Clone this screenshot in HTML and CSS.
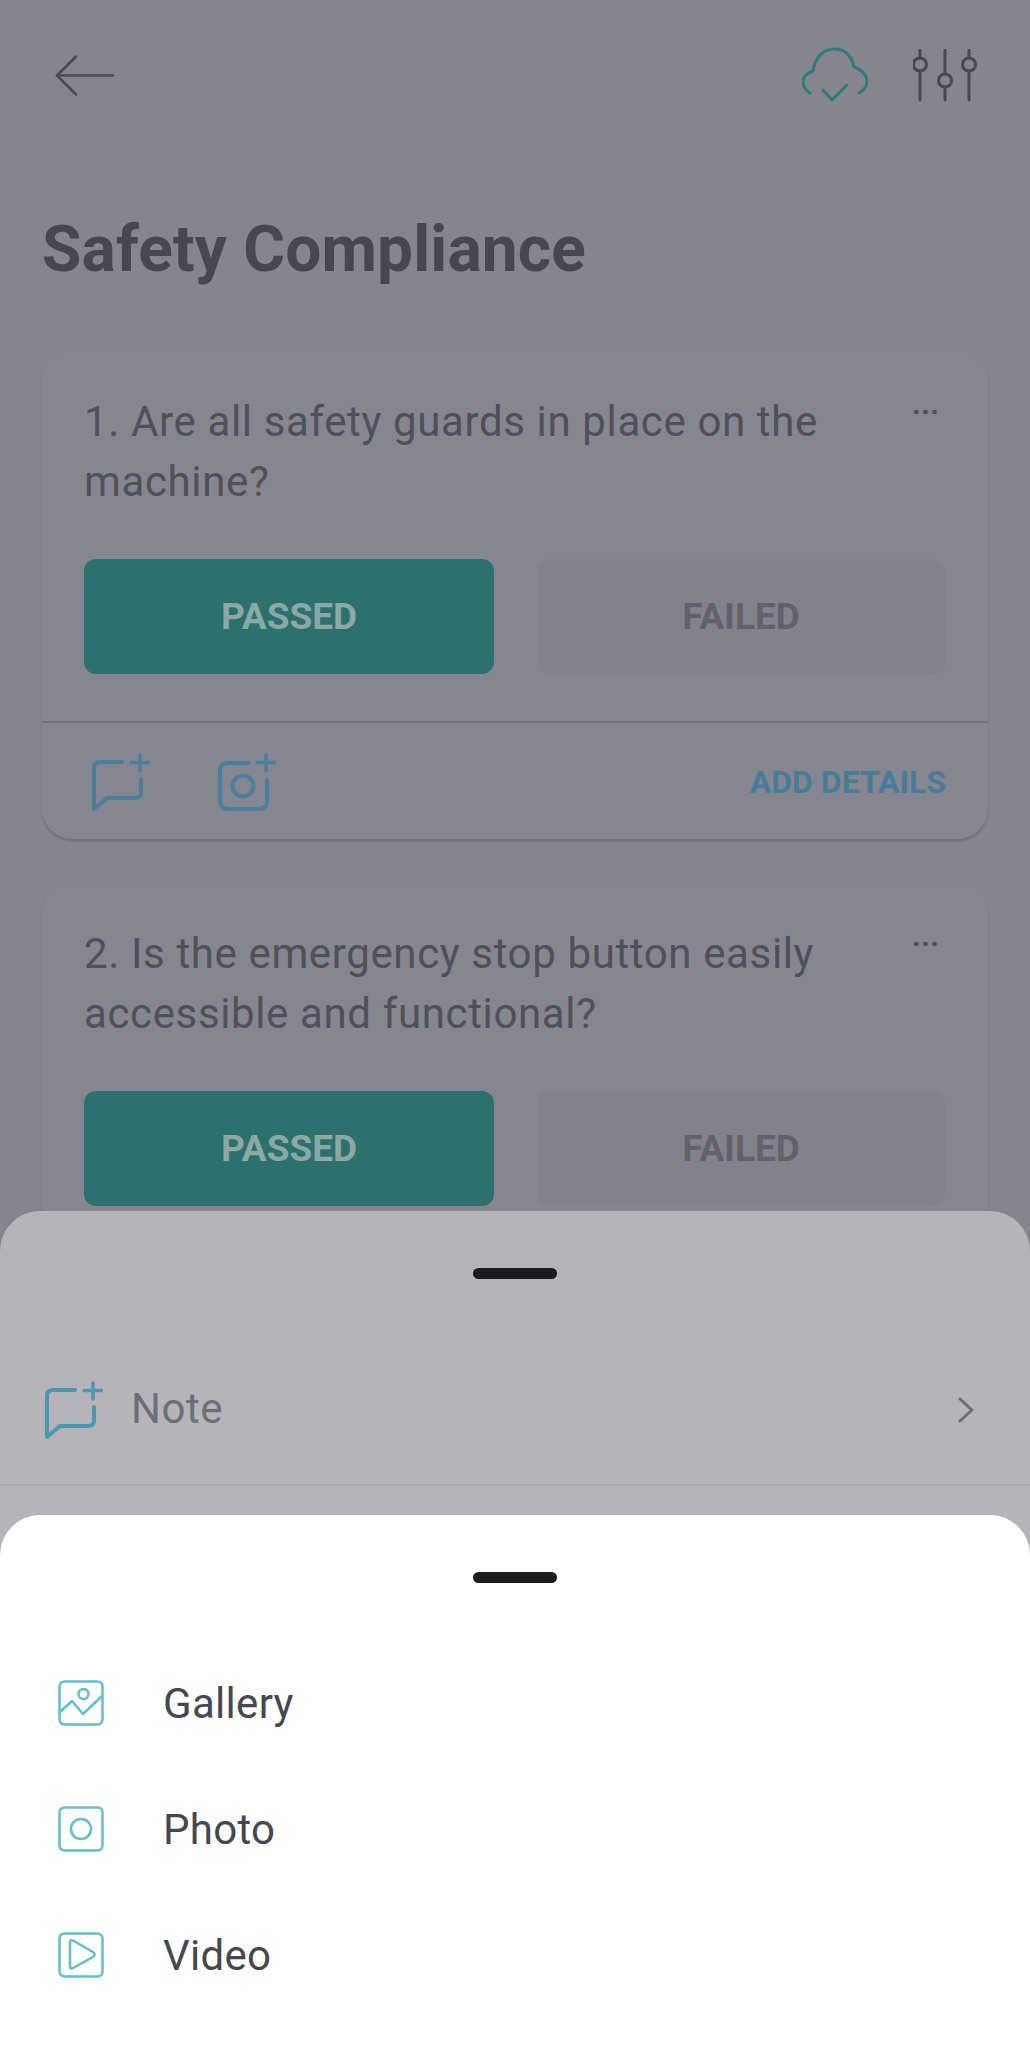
FILE: index.html
```html
<!DOCTYPE html>
<html lang="en">
<head>
<meta charset="UTF-8">
<meta name="viewport" content="width=device-width, initial-scale=1.0">
<title>Safety Compliance</title>
<link rel="stylesheet" href="styles.css">
</head>
<body>
<div class="app">
  <header class="topbar">
    <svg class="icon-back" width="60" height="41" viewBox="0 0 60 41" fill="none" stroke="#4a4a54" stroke-width="2.5" stroke-linecap="round" stroke-linejoin="round">
      <path d="M21 1.5 L2 20.5 L21 39.5"/><path d="M2 20.5 H58"/>
    </svg>
    <div class="topbar-right">
      <svg width="66" height="56" viewBox="0 0 66 56" fill="none" stroke="#2f7d78" stroke-width="3" stroke-linecap="round" stroke-linejoin="round">
        <path d="M8 46 C3 43 1 38 1 34 C1 30 5 26 11 24 C13 11 21 2 32 2 C43 2 50 9 52 20 C59 22 65 28 65 34 C65 39 62 43 57 46"/>
        <path d="M21 43 L30 53 L45 38"/>
      </svg>
      <svg class="icon-sliders" width="64" height="53" viewBox="0 0 64 53" fill="none" stroke="#484852" stroke-width="3" stroke-linecap="round">
        <path d="M7 1 V9 M7 22 V51"/><circle cx="7" cy="15.500" r="6.500"/>
        <path d="M32 1 V25 M32 38 V51"/><circle cx="32" cy="31.500" r="6.500"/>
        <path d="M56 1 V9 M56 22 V51"/><circle cx="56" cy="15.500" r="6.500"/>
      </svg>
    </div>
  </header>

  <h1 class="title">Safety Compliance</h1>

  <section class="card">
    <div class="card-body">
      <div class="question">
        <p>1. Are all safety guards in place on the machine?</p>
        <span class="more">&middot;&middot;&middot;</span>
      </div>
      <div class="answers">
        <div class="answer answer-passed">PASSED</div>
        <div class="answer answer-failed">FAILED</div>
      </div>
    </div>
    <div class="card-foot">
      <svg width="58" height="58" viewBox="0 0 58 58" fill="none" stroke="#4c7f9e" stroke-width="4" stroke-linecap="round" stroke-linejoin="round">
        <path d="M30 9 H8 C4 9 2 11 2 15 V56 L15 45 H43 C47 45 49 43 49 40 V26"/>
        <path d="M48 2 V18 M39 9.500 H57" stroke-width="3.500"/>
      </svg>
      <svg class="foot-camera" width="58" height="58" viewBox="0 0 58 58" fill="none" stroke="#4c7f9e" stroke-width="4" stroke-linecap="round" stroke-linejoin="round">
        <path d="M31 10 H10 C5 10 2 13 2 18 V47 C2 53 5 56 10 56 H41 C46 56 49 53 49 47 V27"/>
        <circle cx="25" cy="33" r="10.500"/>
        <path d="M48 2 V18 M39 9.500 H57" stroke-width="3.500"/>
      </svg>
      <span class="add-details">ADD DETAILS</span>
    </div>
  </section>

  <section class="card">
    <div class="card-body">
      <div class="question">
        <p>2. Is the emergency stop button easily accessible and functional?</p>
        <span class="more">&middot;&middot;&middot;</span>
      </div>
      <div class="answers">
        <div class="answer answer-passed">PASSED</div>
        <div class="answer answer-failed">FAILED</div>
      </div>
    </div>
  </section>

  <div class="sheet sheet-back">
    <div class="handle"></div>
    <div class="note-row">
      <svg width="58" height="58" viewBox="0 0 58 58" fill="none" stroke="#4c97b3" stroke-width="4" stroke-linecap="round" stroke-linejoin="round">
        <path d="M30 9 H8 C4 9 2 11 2 15 V56 L15 45 H43 C47 45 49 43 49 40 V26"/>
        <path d="M48 2 V18 M39 9.500 H57" stroke-width="3.500"/>
      </svg>
      <span class="note-label">Note</span>
      <svg class="chevron" width="16" height="26" viewBox="0 0 16 26" fill="none" stroke="#6e6e78" stroke-width="3" stroke-linecap="round" stroke-linejoin="round">
        <path d="M2 2 L14 13 L2 24"/>
      </svg>
    </div>
  </div>

  <div class="sheet sheet-front">
    <div class="handle"></div>
    <ul class="media-list">
      <li class="media-row">
        <svg width="46" height="46" viewBox="0 0 46 46" fill="none" stroke="#5ec0cf" stroke-width="2.500" stroke-linecap="round" stroke-linejoin="round">
          <rect x="1.500" y="1.500" width="43" height="43" rx="5"/>
          <path d="M2 32 L14 21 L25 34 L44 16"/>
          <circle cx="25.500" cy="14" r="5"/>
        </svg>
        <span>Gallery</span>
      </li>
      <li class="media-row">
        <svg width="46" height="46" viewBox="0 0 46 46" fill="none" stroke="#5ec0cf" stroke-width="2.500" stroke-linecap="round" stroke-linejoin="round">
          <rect x="1.500" y="1.500" width="43" height="43" rx="5"/>
          <circle cx="23" cy="23" r="10"/>
        </svg>
        <span>Photo</span>
      </li>
      <li class="media-row">
        <svg width="46" height="46" viewBox="0 0 46 46" fill="none" stroke="#5ec0cf" stroke-width="2.500" stroke-linecap="round" stroke-linejoin="round">
          <rect x="1.500" y="1.500" width="43" height="43" rx="5"/>
          <path d="M12 10 C12 8 14 8 15 8.500 L35 20 C37 21.500 37 24 35 25 L15 36 C13 37 12 36 12 34 Z"/>
        </svg>
        <span>Video</span>
      </li>
    </ul>
  </div>
</div>
</body>
</html>
```

FILE: styles.css
```css
* {
    box-sizing: border-box;
}
body {
    margin: 0;
    font-family: Roboto, "Liberation Sans", sans-serif;
}
.app {
    position: relative;
    height: 2048px;
    padding: 0 42px;
    overflow: hidden;
    background-color: #85858f;
}
.topbar {
    display: flex;
    justify-content: space-between;
    align-items: center;
    height: 54px;
    margin-top: 48px;
    padding: 0 11px 0 13px;
}
.topbar-right {
    display: flex;
    align-items: flex-start;
    gap: 44px;
}
.icon-sliders {
    margin: 2px 0 0 1px;
}
.title {
    margin: 111px 0 0;
    font-size: 64px;
    line-height: 74px;
    font-weight: 700;
    letter-spacing: 0.15px;
    color: #47474f;
}
.card {
    margin-top: 62px;
    background-color: #868690;
    border-radius: 30px;
    box-shadow: 0 2px 2px rgba(60, 60, 70, 0.3);
}
.card + .card {
    margin-top: 42px;
}
.card-body {
    padding: 43px 42px 47px;
}
.question {
    display: flex;
    justify-content: space-between;
    min-height: 120px;
}
.question p {
    margin: 0;
    width: 760px;
    font-size: 42px;
    line-height: 60px;
    letter-spacing: 0.63px;
    color: #50505a;
}
.more {
    margin-right: 7px;
    font-size: 30px;
    line-height: 40px;
    font-weight: 700;
    color: #50505a;
}
.answers {
    display: flex;
    gap: 43px;
    margin-top: 47px;
}
.answer {
    display: flex;
    justify-content: center;
    align-items: center;
    width: 410px;
    height: 115px;
    padding-bottom: 1px;
    border-radius: 12px;
    font-size: 37px;
    font-weight: 700;
}
.answer-passed {
    background-color: #2c716d;
    color: #8ba8a6;
}
.answer-failed {
    width: 408px;
    background-color: #82828c;
    color: #62626c;
}
.card-foot {
    display: flex;
    align-items: center;
    height: 118px;
    padding: 1px 42px 0 50px;
    border-top: 2px solid #73737d;
}
.foot-camera {
    margin-left: 68px;
}
.add-details {
    margin-left: auto;
    font-size: 32px;
    font-weight: 700;
    color: #487c9b;
}
.sheet {
    position: absolute;
    left: 0;
    right: 0;
    bottom: 0;
    border-radius: 40px 40px 0 0;
}
.sheet-back {
    top: 1211px;
    background-color: #b5b4b9;
}
.sheet-front {
    top: 1515px;
    background-color: #fff;
}
.handle {
    width: 84px;
    height: 11px;
    margin: 57px auto 0;
    border-radius: 6px;
    background-color: #1b1b20;
}
.note-row {
    display: flex;
    align-items: center;
    height: 207px;
    padding: 56px 56px 0 45px;
    border-bottom: 2px solid #adacb2;
}
.note-label {
    margin: -3px 0 0 28px;
    font-size: 42px;
    letter-spacing: 0.5px;
    color: #6e6e78;
}
.chevron {
    margin-left: auto;
}
.media-list {
    margin: 57px 0 0;
    padding: 0;
    list-style: none;
}
.media-row {
    display: flex;
    align-items: center;
    gap: 59px;
    height: 126px;
    padding-left: 58px;
    font-size: 42px;
    letter-spacing: 0.3px;
    color: #47474f;
}
```
